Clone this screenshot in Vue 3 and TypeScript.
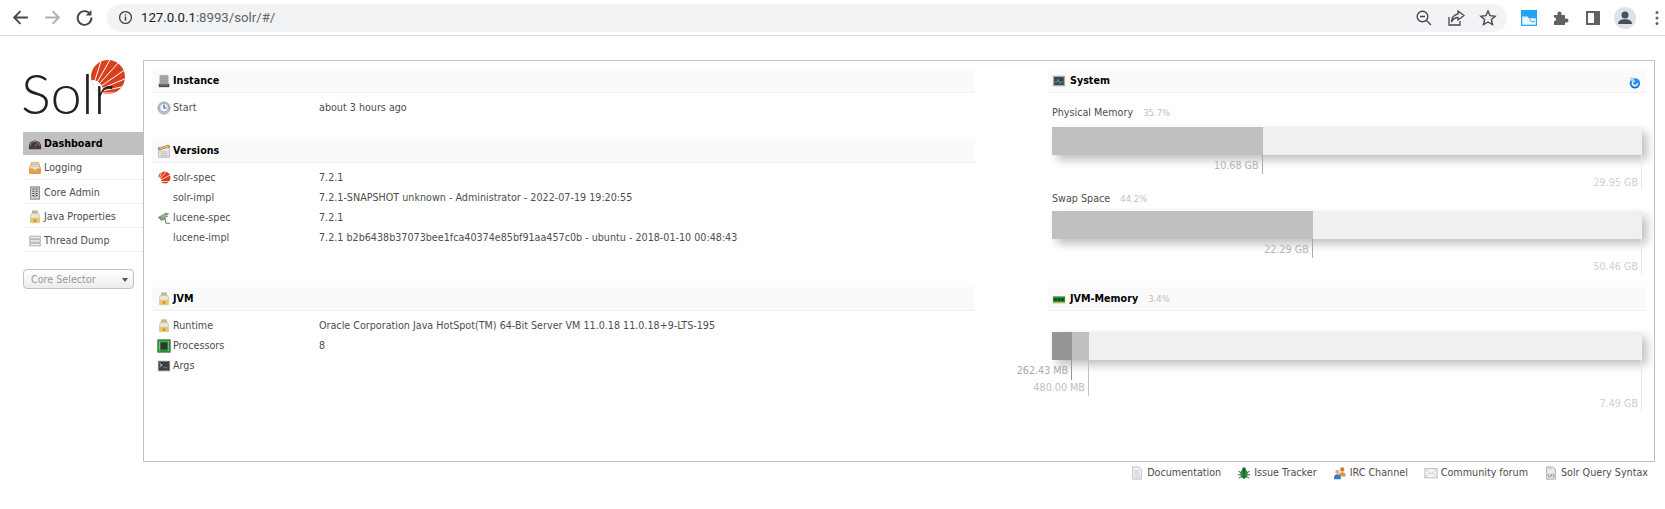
<script setup lang="ts">
type Row = { icon?: string; label: string; value: string }
type Section = { title: string; icon: string; cls: string; rows: Row[] }

const sections: Section[] = [
  { title: 'Instance', icon: 'server', cls: 'instance', rows: [{ icon: 'clock', label: 'Start', value: 'about 3 hours ago' }] },
  {
    title: 'Versions', icon: 'note', cls: 'versions', rows: [
      { icon: 'solr', label: 'solr-spec', value: '7.2.1' },
      { label: 'solr-impl', value: '7.2.1-SNAPSHOT unknown - Administrator - 2022-07-19 19:20:55' },
      { icon: 'lucene', label: 'lucene-spec', value: '7.2.1' },
      { label: 'lucene-impl', value: '7.2.1 b2b6438b37073bee1fca40374e85bf91aa457c0b - ubuntu - 2018-01-10 00:48:43' },
    ],
  },
  {
    title: 'JVM', icon: 'jar', cls: 'jvm', rows: [
      { icon: 'jar', label: 'Runtime', value: 'Oracle Corporation Java HotSpot(TM) 64-Bit Server VM 11.0.18 11.0.18+9-LTS-195' },
      { icon: 'cpu', label: 'Processors', value: '8' },
      { icon: 'term', label: 'Args', value: '' },
    ],
  },
]

const nav = [
  { icon: 'gauge', label: 'Dashboard', active: true },
  { icon: 'log', label: 'Logging' },
  { icon: 'tower', label: 'Core Admin' },
  { icon: 'jar', label: 'Java Properties' },
  { icon: 'stack', label: 'Thread Dump' },
]

const links = [
  { icon: 'doc', label: 'Documentation' },
  { icon: 'bug', label: 'Issue Tracker' },
  { icon: 'people', label: 'IRC Channel' },
  { icon: 'mail', label: 'Community forum' },
  { icon: 'query', label: 'Solr Query Syntax' },
]

const BAR = 590
const px = (p: number) => `${(p * BAR) / 100}px`
const physical = 35.7
const swap = 44.2
const jvmUsed = 3.42
const jvmTotal = 6.26
</script>

<template>
  <div class="page">
    <svg class="sprite" aria-hidden="true">
      <symbol id="i-server" viewBox="0 0 16 16"><rect x="3" y="1" width="10" height="10" fill="#b5b5b5"/><path d="M3 3h10M3 5h10M3 7h10M3 9h10" stroke="#8d8d8d"/><rect x="2" y="11" width="12" height="4" fill="#444"/><rect x="3" y="12" width="10" height="1" fill="#999"/></symbol>
      <symbol id="i-clock" viewBox="0 0 16 16"><circle cx="8" cy="8" r="7" fill="#c9ccd2" stroke="#9a9da3"/><circle cx="8" cy="7.5" r="5" fill="#f4f6fb" stroke="#7f8fc0"/><path d="M8 4v4h3" stroke="#3558b0" stroke-width="1.4" fill="none"/></symbol>
      <symbol id="i-note" viewBox="0 0 16 16"><rect x="2" y="4" width="12" height="11" fill="#ececec" stroke="#a8a8a8"/><path d="M4 9h8M4 11h8M4 13h8" stroke="#b5b5b5"/><path d="M1 5l12-4 2 2-12 4z" fill="#e3a64c" stroke="#8c6428" stroke-width=".7"/><path d="M4 4l2 2M7 3l2 2M10 2l2 2" stroke="#fff"/></symbol>
      <symbol id="i-solr" viewBox="0 0 16 16"><circle cx="8.500" cy="7.500" r="7" fill="#d9411e"/><circle cx="1.500" cy="11" r="3.500" fill="#fff"/><path d="M1 12L6 0M1 12L11 0M1 12L16 4M1 12l15 0M1 12l12 4" stroke="#fff" stroke-width=".8"/></symbol>
      <symbol id="i-lucene" viewBox="0 0 16 16"><path d="M1 7l9-5 4 1-3 2 2 1-4 2 1 1-5 2z" fill="#6f8a6a"/><path d="M4 5l6-1M4 7l7-2M5 9l5-2" stroke="#d8e0d4" stroke-width=".7"/><path d="M9 8l1 6h5" stroke="#55664f" fill="none"/></symbol>
      <symbol id="i-jar" viewBox="0 0 16 16"><rect x="5" y="1" width="6" height="2.500" fill="#cbbf9a" stroke="#a69a76" stroke-width=".6"/><path d="M4 4h8l1 2v8.500H3V6z" fill="#e9e6da" stroke="#b8b3a4" stroke-width=".7"/><rect x="3" y="9" width="10" height="5.500" fill="#e9c46a"/><path d="M6 13l2-3 2 3z" fill="#d77f1c"/></symbol>
      <symbol id="i-cpu" viewBox="0 0 16 16"><rect x="1" y="1" width="14" height="14" fill="#2f9a3a" stroke="#1e6b28"/><rect x="4" y="4" width="8" height="8" fill="#333"/><path d="M3 2v12M5.500 2v1M8 2v1M10.500 2v1M13 2v12M2 5.500h1M2 8h1M2 10.500h1" stroke="#b6e6ae" stroke-width=".6"/></symbol>
      <symbol id="i-term" viewBox="0 0 16 16"><rect x="1" y="2" width="14" height="12" fill="#9a9a9a"/><rect x="2" y="3" width="12" height="10" fill="#3a3d44"/><path d="M3 5l3 2-3 2" stroke="#ddd" fill="none"/><path d="M7 10h5" stroke="#888"/></symbol>
      <symbol id="i-monitor" viewBox="0 0 16 16"><rect x="1" y="2" width="14" height="12" fill="#a9a9a9"/><rect x="2.500" y="3.500" width="11" height="9" fill="#3b4348"/><path d="M3 9h3l1-3 2 5 1-2h3" stroke="#66c2b0" stroke-width=".8" fill="none"/></symbol>
      <symbol id="i-ram" viewBox="0 0 16 16"><rect x="1" y="5" width="14" height="7" fill="#2e8b38"/><path d="M2.500 7h3v3h-3zM6.500 7h3v3h-3zM10.500 7h3v3h-3z" fill="#123f18"/><path d="M1 12.500h14" stroke="#c7b34f"/></symbol>
      <symbol id="i-refresh" viewBox="0 0 16 16"><circle cx="8.500" cy="9" r="6.500" fill="#2f8fe0"/><path d="M11.500 9a3 3 0 1 1-3-3" fill="none" stroke="#e8f5ff" stroke-width="1.700"/><path d="M2 1.500l6.500 1L5.500 8z" fill="#a8d2f2"/><path d="M4 12.500a6 6 0 0 0 9 0" stroke="#155fb0" fill="none"/></symbol>
      <symbol id="i-gauge" viewBox="0 0 16 16"><path d="M1 11a7 7 0 0 1 14 0v3H1z" fill="#3d3d3d"/><path d="M3 10a5 5 0 0 1 10 0" stroke="#8a8a8a" fill="none"/><path d="M8 11l3-5" stroke="#d9411e" stroke-width="1.300"/></symbol>
      <symbol id="i-log" viewBox="0 0 16 16"><path d="M2 8l2-6h8l2 6v6H2z" fill="#f4e3c4" stroke="#d88f3a"/><path d="M4 4h8M4 6h8" stroke="#a8b8c8"/><path d="M2 9h4l1 2h2l1-2h4v5H2z" fill="#eda24b" stroke="#c77a25" stroke-width=".6"/></symbol>
      <symbol id="i-tower" viewBox="0 0 16 16"><rect x="3" y="1" width="10" height="14" fill="#d5d5d5" stroke="#777"/><path d="M5 3.500h2M9 3.500h2M5 6h2M9 6h2M5 8.500h2M9 8.500h2M5 11h2M9 11h2" stroke="#444" stroke-width="1.200"/><path d="M8 1v14" stroke="#999"/></symbol>
      <symbol id="i-stack" viewBox="0 0 16 16"><path d="M2 2.500h12v3H2zM2 6.500h12v3H2zM2 10.500h12v3H2z" fill="#ededed" stroke="#a5a5a5"/></symbol>
      <symbol id="i-doc" viewBox="0 0 16 16"><path d="M3 1h7l3 3v11H3z" fill="#f2f4f6" stroke="#b4bcc4"/><path d="M5 5h5M5 7h6M5 9h6M5 11h6M5 13h6" stroke="#c4ccd2"/></symbol>
      <symbol id="i-bug" viewBox="0 0 16 16"><ellipse cx="8" cy="9" rx="4.200" ry="5.500" fill="#2c8b3c"/><circle cx="8" cy="3.500" r="2" fill="#1e6a2c"/><path d="M8 4v10M1.500 6l3 1.500M14.500 6l-3 1.500M1 10h3M15 10h-3M2 14l3-2M14 14l-3-2" stroke="#14511f"/></symbol>
      <symbol id="i-people" viewBox="0 0 16 16"><circle cx="10.500" cy="4" r="2.500" fill="#c9803c"/><path d="M6.500 12c0-4 1.500-5 4-5s4 1 4 5z" fill="#d9954f"/><circle cx="5" cy="6.500" r="2.300" fill="#e0a878"/><path d="M1 15c0-4 1.500-5.500 4-5.500S9 11 9 15z" fill="#2f7ec2"/></symbol>
      <symbol id="i-mail" viewBox="0 0 16 16"><rect x="1" y="3" width="14" height="10.500" fill="#f5f5f5" stroke="#b4b4b4"/><path d="M1.500 3.500L8 9l6.500-5.500M1.500 13L6 8M14.500 13L10 8" stroke="#c4c4c4" fill="none"/></symbol>
      <symbol id="i-query" viewBox="0 0 16 16"><path d="M3 1h7l3 3v11H3z" fill="#e8ecef" stroke="#9aa4ac"/><path d="M5 3h4" stroke="#bcc4ca"/><path d="M6 9l-1.500 2L6 13M10 9l1.500 2L10 13M8.700 9l-1.400 4" stroke="#4f6270" fill="none" stroke-width=".9"/></symbol>
    </svg>

    <header class="chrome">
      <svg class="tool" viewBox="0 0 18 18"><path d="M16 9H3M9 3L3 9l6 6" fill="none" stroke="#45474b" stroke-width="1.800"/></svg>
      <svg class="tool" viewBox="0 0 18 18"><path d="M2 9h13M9 3l6 6-6 6" fill="none" stroke="#aeb0b3" stroke-width="1.800"/></svg>
      <svg class="tool" viewBox="0 0 18 18"><path d="M14.500 6A6.500 6.500 0 1 0 15.500 9" fill="none" stroke="#45474b" stroke-width="1.800"/><path d="M15.500 1.800v5.400h-5.400z" fill="#45474b"/></svg>
      <div class="omni">
        <svg class="info" viewBox="0 0 16 16"><circle cx="8" cy="8" r="6.300" fill="none" stroke="#3e4043" stroke-width="1.400"/><path d="M8 7v4.500M8 4.400v1.500" stroke="#3e4043" stroke-width="1.500"/></svg>
        <span class="url"><b>127.0.0.1</b>:8993/solr/#/</span>
        <span class="omni-space"></span>
        <svg class="omni-ico" viewBox="0 0 18 18"><circle cx="7.500" cy="7.500" r="5.300" fill="none" stroke="#45474b" stroke-width="1.400"/><path d="M11.500 11.500L16 16M5 7.500h5" stroke="#45474b" stroke-width="1.400"/></svg>
        <svg class="omni-ico" viewBox="0 0 18 18"><path d="M2 8v8h11v-4" fill="none" stroke="#45474b" stroke-width="1.300"/><path d="M11 2l6 4.500-6 4.500V8.500C8 8.500 6 10 4.500 13c0-4 2.500-7.500 6.500-8z" fill="none" stroke="#45474b" stroke-width="1.300"/></svg>
        <svg class="omni-ico" viewBox="0 0 18 18"><path d="M9 2l2.100 4.700 5.100.5-3.800 3.400 1.100 5L9 13l-4.500 2.600 1.100-5L1.800 7.200l5.100-.5z" fill="none" stroke="#45474b" stroke-width="1.400"/></svg>
      </div>
      <svg class="ext" viewBox="0 0 16 16"><rect width="16" height="16" fill="#22a4ee"/><path d="M1.200 6.500h5.300l1.500 1.700h6.800v6.600H1.200z" fill="#e8f6ff"/><path d="M8.500 8.500l1.500 3h4" stroke="#22a4ee" fill="none" stroke-width=".8"/></svg>
      <svg class="chrome-ico puzzle" viewBox="0 0 16 16"><path d="M1 5h3.500V3.500a2 2 0 0 1 4 0V5H12v3.500h1.500a2 2 0 0 1 0 4H12V15H1v-4h1a2 2 0 0 0 0-3.500H1z" fill="#5f6368"/></svg>
      <svg class="chrome-ico panel" viewBox="0 0 16 16"><path d="M1 1h14v14H1zM3 3v10h6V3z" fill="#5f6368" fill-rule="evenodd"/></svg>
      <span class="avatar"><svg viewBox="0 0 22 22"><circle cx="11" cy="8" r="3.500" fill="#45505f"/><path d="M4 17c0-3.500 3.500-4.800 7-4.800s7 1.300 7 4.800z" fill="#45505f"/></svg></span>
      <svg class="dots" viewBox="0 0 4 16"><circle cx="2" cy="2.500" r="1.500" fill="#5f6368"/><circle cx="2" cy="8" r="1.500" fill="#5f6368"/><circle cx="2" cy="13.500" r="1.500" fill="#5f6368"/></svg>
    </header>

    <div class="shell">
      <aside class="side">
        <div class="logo">
          <span class="logo-text">Solr</span>
          <svg class="sun" viewBox="0 0 34 34">
            <defs><clipPath id="sun-clip"><circle cx="17" cy="17" r="17"/></clipPath></defs>
            <g clip-path="url(#sun-clip)">
              <rect width="34" height="34" fill="#d9411e"/>
              <circle cx="1" cy="31" r="11" fill="#fff"/>
              <g stroke="#fff" stroke-width="1">
                <path d="M0 33L11 -2"/><path d="M0 33L20 -2"/><path d="M0 33L28 2"/><path d="M0 33L35 9"/><path d="M0 33L36 18"/><path d="M0 33L36 26"/><path d="M0 33L36 33"/>
              </g>
            </g>
          </svg>
        </div>
        <nav class="nav">
          <a v-for="item in nav" :key="item.label" class="nav-item" :class="{ active: item.active }">
            <svg class="ico"><use :href="`#i-${item.icon}`"/></svg>
            <span>{{ item.label }}</span>
          </a>
        </nav>
        <div class="selector"><span>Core Selector</span><i class="caret"></i></div>
      </aside>

      <main class="content">
        <div class="col-left">
          <section v-for="s in sections" :key="s.title" class="sec" :class="s.cls">
            <h2 class="head"><svg class="ico"><use :href="`#i-${s.icon}`"/></svg>{{ s.title }}</h2>
            <div class="rows">
              <div v-for="r in s.rows" :key="r.label" class="row">
                <span class="key"><svg v-if="r.icon" class="ico"><use :href="`#i-${r.icon}`"/></svg><span v-else class="ico"></span>{{ r.label }}</span>
                <span class="val">{{ r.value }}</span>
              </div>
            </div>
          </section>
        </div>

        <div class="col-right">
          <section class="sys">
            <h2 class="head"><svg class="ico"><use href="#i-monitor"/></svg>System<svg class="refresh"><use href="#i-refresh"/></svg></h2>
            <div class="mem first">
              <div class="mem-title">Physical Memory <small>35.7%</small></div>
              <div class="bar">
                <div class="fill total" :style="{ width: px(physical) }"></div>
                <div class="tick t-used" :style="{ left: px(physical) }"><em>10.68 GB</em></div>
                <div class="tick t-max"><em>29.95 GB</em></div>
              </div>
            </div>
            <div class="mem">
              <div class="mem-title">Swap Space <small>44.2%</small></div>
              <div class="bar">
                <div class="fill total" :style="{ width: px(swap) }"></div>
                <div class="tick t-used" :style="{ left: px(swap) }"><em>22.29 GB</em></div>
                <div class="tick t-max"><em>50.46 GB</em></div>
              </div>
            </div>
          </section>
          <section class="jvm-mem">
            <h2 class="head"><svg class="ico"><use href="#i-ram"/></svg>JVM-Memory <small>3.4%</small></h2>
            <div class="bar">
              <div class="fill total" :style="{ width: px(jvmTotal) }"></div>
              <div class="fill used" :style="{ width: px(jvmUsed) }"></div>
              <div class="tick t-jused" :style="{ left: px(jvmUsed) }"><em>262.43 MB</em></div>
              <div class="tick t-jtotal" :style="{ left: px(jvmTotal) }"><em>480.00 MB</em></div>
              <div class="tick t-max"><em>7.49 GB</em></div>
            </div>
          </section>
        </div>
      </main>
    </div>

    <footer class="foot">
      <a v-for="l in links" :key="l.label" class="foot-link"><svg class="ico"><use :href="`#i-${l.icon}`"/></svg>{{ l.label }}</a>
    </footer>
  </div>
</template>

<style scoped>
.page { width: 1665px; height: 509px; overflow: hidden; background: #fff; font: 9.6px/20px "DejaVu Sans", Verdana, sans-serif; color: #4d4d4d; }
.sprite { position: absolute; width: 0; height: 0; }
.ico { display: inline-block; width: 14px; height: 14px; flex: none; }

.chrome { height: 35px; box-sizing: content-box; border-bottom: 1px solid #dadce0; display: flex; align-items: center; padding-left: 11px; }
.tool { width: 19px; height: 19px; margin-right: 13px; }
.omni { width: 1400px; height: 28px; background: #f1f3f4; border-radius: 14px; display: flex; align-items: center; padding: 0 10px 0 11px; box-sizing: border-box; flex: none; }
.info { width: 15px; height: 15px; margin-right: 8px; }
.url { font: 13.2px/28px Roboto, sans-serif; color: #5f6368; }
.url b { font-weight: 400; color: #202124; }
.omni-space { flex: 1; }
.omni-ico { width: 18px; height: 18px; margin-left: 14px; }
.ext { width: 16px; height: 16px; margin-left: 14px; flex: none; }
.chrome-ico { width: 16px; height: 16px; flex: none; }
.puzzle { margin-left: 16px; }
.panel { margin-left: 16px; }
.avatar { width: 22px; height: 22px; border-radius: 50%; background: #dee1e8; margin-left: 13px; flex: none; }
.avatar svg { display: block; }
.dots { width: 4px; height: 16px; margin-left: 19px; flex: none; }

.shell { display: flex; padding: 24px 0 0 23px; }
.side { width: 120px; flex: none; }
.logo { position: relative; height: 72px; box-sizing: border-box; padding-top: 1px; }
.logo-text { position: relative; z-index: 1; display: block; font: 300 56px/64px Lato, "Open Sans", sans-serif; color: #222; margin-left: -2px; letter-spacing: -.3px; }
.sun { position: absolute; left: 68px; top: 0; width: 34px; height: 34px; }
.nav { display: flex; flex-direction: column; }
.nav-item { height: 24px; display: flex; align-items: center; gap: 2px; padding: 2px 0 0 5px; border-bottom: 1px solid #f0f0f0; box-sizing: border-box; color: #4d4d4d; }
.nav-item.active { height: 23px; padding-top: 0; background: #c0c0c0; color: #000; font-weight: 700; border: 0; }
.nav-item:nth-child(2) { height: 25px; }
.selector { width: 111px; height: 20px; margin-top: 17px; box-sizing: border-box; border: 1px solid #c0c0c0; border-radius: 4px; background: linear-gradient(#fff, #ececec); display: flex; align-items: center; justify-content: space-between; padding: 2px 5px 0 7px; color: #999; }
.caret { width: 0; height: 0; border: 3px solid transparent; border-top: 4px solid #555; border-bottom: 0; }

.content { width: 1512px; height: 402px; box-sizing: border-box; border: 1px solid #c0c0c0; padding: 8px 8px 0 8px; display: flex; justify-content: space-between; }
.col-left { width: 823px; }
.col-right { width: 598px; }
.head { height: 24px; margin: 0; display: flex; align-items: center; gap: 2px; padding-left: 5px; box-sizing: border-box; background: #fafafa; border-bottom: 1px solid #f0f0f0; font: 700 9.6px/20px "DejaVu Sans", Verdana, sans-serif; color: #000; }
.head small { font-weight: 400; font-size: 8.5px; color: #c0c0c0; margin-left: 6px; }
.sec { display: flex; flex-direction: column; }
.rows { padding-top: 5px; }
.instance { height: 70px; }
.versions { height: 148px; }
.row { display: flex; height: 20px; align-items: center; padding-left: 5px; }
.key { width: 162px; display: flex; align-items: center; gap: 2px; flex: none; }
.sys .head, .jvm-mem .head { padding-left: 4px; gap: 4px; }
.refresh { width: 13px; height: 13px; margin: 3px 5px 0 auto; }
.mem { padding-left: 4px; height: 96px; box-sizing: border-box; }
.mem.first { height: 98px; padding-top: 12px; }
.mem.first .mem-title { margin-bottom: 6px; }
.mem-title { height: 16px; line-height: 16px; margin-bottom: 4px; }
.mem-title small { font-size: 8.5px; color: #c0c0c0; margin-left: 7px; }
.bar { position: relative; width: 590px; height: 28px; background: #f0f0f0; box-shadow: 5px 5px 10px #c0c0c0; }
.jvm-mem .bar { margin: 21px 0 0 4px; }
.fill { position: absolute; left: 0; top: 0; height: 100%; }
.fill.total { background: #c0c0c0; }
.fill.used { background: #969696; }
.tick { position: absolute; top: 100%; width: 0; border-left: 1px solid #c0c0c0; }
.tick em { position: absolute; right: 4px; white-space: nowrap; font-style: normal; line-height: 14px; color: #c0c0c0; }
.t-used { height: 19px; margin-left: -1px; border-color: #aaa; }
.t-used em { top: 4px; color: #b4b4b4; }
.t-max { right: 0; height: 35px; border-color: #e8e8e8; }
.t-max em { top: 21px; color: #d0d0d0; }
.t-jused { height: 20px; margin-left: -1px; border-color: #969696; }
.t-jused em { top: 4px; color: #a8a8a8; }
.t-jtotal { height: 36px; margin-left: -1px; }
.t-jtotal em { top: 21px; color: #c0c0c0; }
.jvm-mem .t-max { height: 52px; }
.jvm-mem .t-max em { top: 37px; }

.foot { display: flex; justify-content: flex-end; gap: 16px; padding: 1px 17px 0 0; height: 20px; align-items: center; }
.foot-link { display: flex; align-items: center; gap: 3px; }
</style>
